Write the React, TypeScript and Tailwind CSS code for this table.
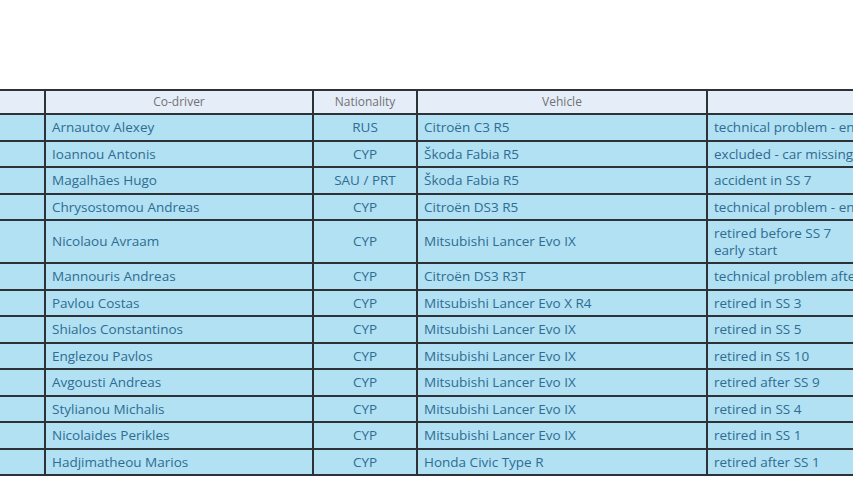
import React from 'react';

type Row = {
  codriver: string;
  nat: string;
  vehicle: string;
  reason: string[];
};

const rows: Row[] = [
  { codriver: 'Arnautov Alexey', nat: 'RUS', vehicle: 'Citroën C3 R5', reason: ['technical problem - engine'] },
  { codriver: 'Ioannou Antonis', nat: 'CYP', vehicle: 'Škoda Fabia R5', reason: ['excluded - car missing at parc fermé'] },
  { codriver: 'Magalhães Hugo', nat: 'SAU / PRT', vehicle: 'Škoda Fabia R5', reason: ['accident in SS 7'] },
  { codriver: 'Chrysostomou Andreas', nat: 'CYP', vehicle: 'Citroën DS3 R5', reason: ['technical problem - engine'] },
  { codriver: 'Nicolaou Avraam', nat: 'CYP', vehicle: 'Mitsubishi Lancer Evo IX', reason: ['retired before SS 7', 'early start'] },
  { codriver: 'Mannouris Andreas', nat: 'CYP', vehicle: 'Citroën DS3 R3T', reason: ['technical problem after SS 2'] },
  { codriver: 'Pavlou Costas', nat: 'CYP', vehicle: 'Mitsubishi Lancer Evo X R4', reason: ['retired in SS 3'] },
  { codriver: 'Shialos Constantinos', nat: 'CYP', vehicle: 'Mitsubishi Lancer Evo IX', reason: ['retired in SS 5'] },
  { codriver: 'Englezou Pavlos', nat: 'CYP', vehicle: 'Mitsubishi Lancer Evo IX', reason: ['retired in SS 10'] },
  { codriver: 'Avgousti Andreas', nat: 'CYP', vehicle: 'Mitsubishi Lancer Evo IX', reason: ['retired after SS 9'] },
  { codriver: 'Stylianou Michalis', nat: 'CYP', vehicle: 'Mitsubishi Lancer Evo IX', reason: ['retired in SS 4'] },
  { codriver: 'Nicolaides Perikles', nat: 'CYP', vehicle: 'Mitsubishi Lancer Evo IX', reason: ['retired in SS 1'] },
  { codriver: 'Hadjimatheou Marios', nat: 'CYP', vehicle: 'Honda Civic Type R', reason: ['retired after SS 1'] },
];

export default function App() {
  return (
    <div className="w-[853px] h-[480px] bg-white overflow-hidden font-['Open_Sans',sans-serif]">
      {/* retirements table, wider than the window like the original page */}
      <div className="pt-[89px]">
        <table className="table-fixed w-[907px] border-collapse text-[13.5px]">
          <colgroup>
            <col className="w-[45px]" />
            <col className="w-[268px]" />
            <col className="w-[104px]" />
            <col className="w-[290px]" />
            <col className="w-[200px]" />
          </colgroup>
          <thead>
            <tr className="bg-[#e5edf9] text-[#727272] text-[12px]">
              <th className="border-2 border-l-0 border-[#2c3236] h-[24px] font-normal"></th>
              <th className="border-2 border-[#2c3236] font-normal">Co-driver</th>
              <th className="border-2 border-[#2c3236] font-normal">Nationality</th>
              <th className="border-2 border-[#2c3236] font-normal">Vehicle</th>
              <th className="border-2 border-[#2c3236] font-normal"></th>
            </tr>
          </thead>
          <tbody>
            {rows.map((r) => (
              <tr key={r.codriver} className="bg-[#b1e1f2] text-[#2f6c93] leading-[16.5px]">
                <td className="border-2 border-l-0 border-[#2c3236] py-[4px]"></td>
                <td className="border-2 border-[#2c3236] py-[4px] pl-[6px] whitespace-nowrap">{r.codriver}</td>
                <td className="border-2 border-[#2c3236] py-[4px] text-center whitespace-nowrap">{r.nat}</td>
                <td className="border-2 border-[#2c3236] py-[4px] pl-[6px] whitespace-nowrap">{r.vehicle}</td>
                <td className="border-2 border-[#2c3236] py-[4px] pl-[6px] whitespace-nowrap overflow-hidden">
                  {r.reason.map((line) => (
                    <div key={line}>{line}</div>
                  ))}
                </td>
              </tr>
            ))}
          </tbody>
        </table>
      </div>
    </div>
  );
}
